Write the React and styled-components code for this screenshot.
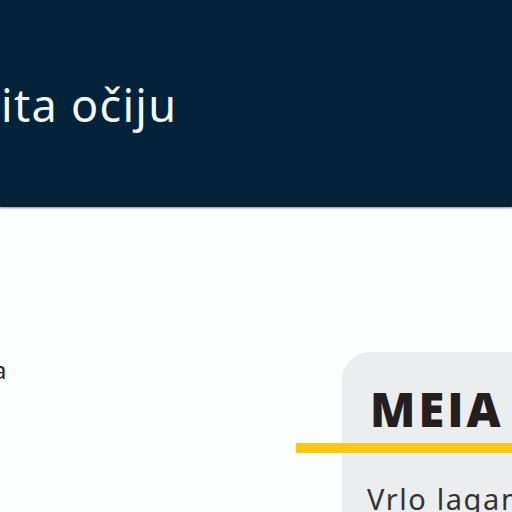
import React from "react";
import styled, { createGlobalStyle } from "styled-components";

const Global = createGlobalStyle`
  html, body { margin: 0; padding: 0; }
  body {
    background: #fcfefe;
    font-family: "Noto Sans", "Open Sans", sans-serif;
    overflow: hidden;
    width: 512px;
    height: 512px;
  }
`;

const Header = styled.header`
  height: 207px;
  background: #02233a;
  box-shadow: 0 1px 2px rgba(0, 0, 0, 0.45);
  display: flex;
  align-items: flex-start;
  padding-left: 1px;
  overflow: hidden;
  position: relative;
  z-index: 1;
`;

const Title = styled.h1`
  margin: 0;
  padding-top: 79px;
  font-size: 45px;
  font-weight: 400;
  line-height: 52px;
  letter-spacing: 1.3px;
  color: #f4f7f9;
  white-space: nowrap;
`;

const Main = styled.main`
  display: grid;
  grid-template-columns: 342px 1fr;
  padding-top: 145px;
  overflow: hidden;
`;

const Lead = styled.p`
  margin: 0;
  margin-left: -7px;
  font-size: 24px;
  line-height: 36px;
  color: #2b2b2b;
  white-space: nowrap;
`;

const Card = styled.section`
  width: 320px;
  background: #ebedee;
  border-top-left-radius: 28px;
  padding: 30px 0 0 28px;
  box-sizing: border-box;
  height: 400px;
`;

const CardTitle = styled.h2`
  margin: 0;
  font-family: "Open Sans", "Noto Sans", sans-serif;
  font-size: 47px;
  font-weight: 760;
  line-height: 55px;
  color: #231f20;
  letter-spacing: 3px;
`;

const Rule = styled.div`
  height: 10px;
  margin: 6px 0 0 -74px;
  background: #fdc814;
`;

const CardText = styled.p`
  margin: 26px 0 0 -3px;
  font-size: 29px;
  line-height: 39px;
  letter-spacing: 1.6px;
  color: #333333;
  white-space: nowrap;
`;

export default function App() {
  return (
    <>
      <Global />
      <Header>
        <Title>ita očiju</Title>
      </Header>
      <Main>
        <div>
          <Lead>a</Lead>
        </div>
        <Card>
          <CardTitle>MEIA</CardTitle>
          <Rule />
          <CardText>Vrlo lagane i udobne</CardText>
        </Card>
      </Main>
    </>
  );
}
